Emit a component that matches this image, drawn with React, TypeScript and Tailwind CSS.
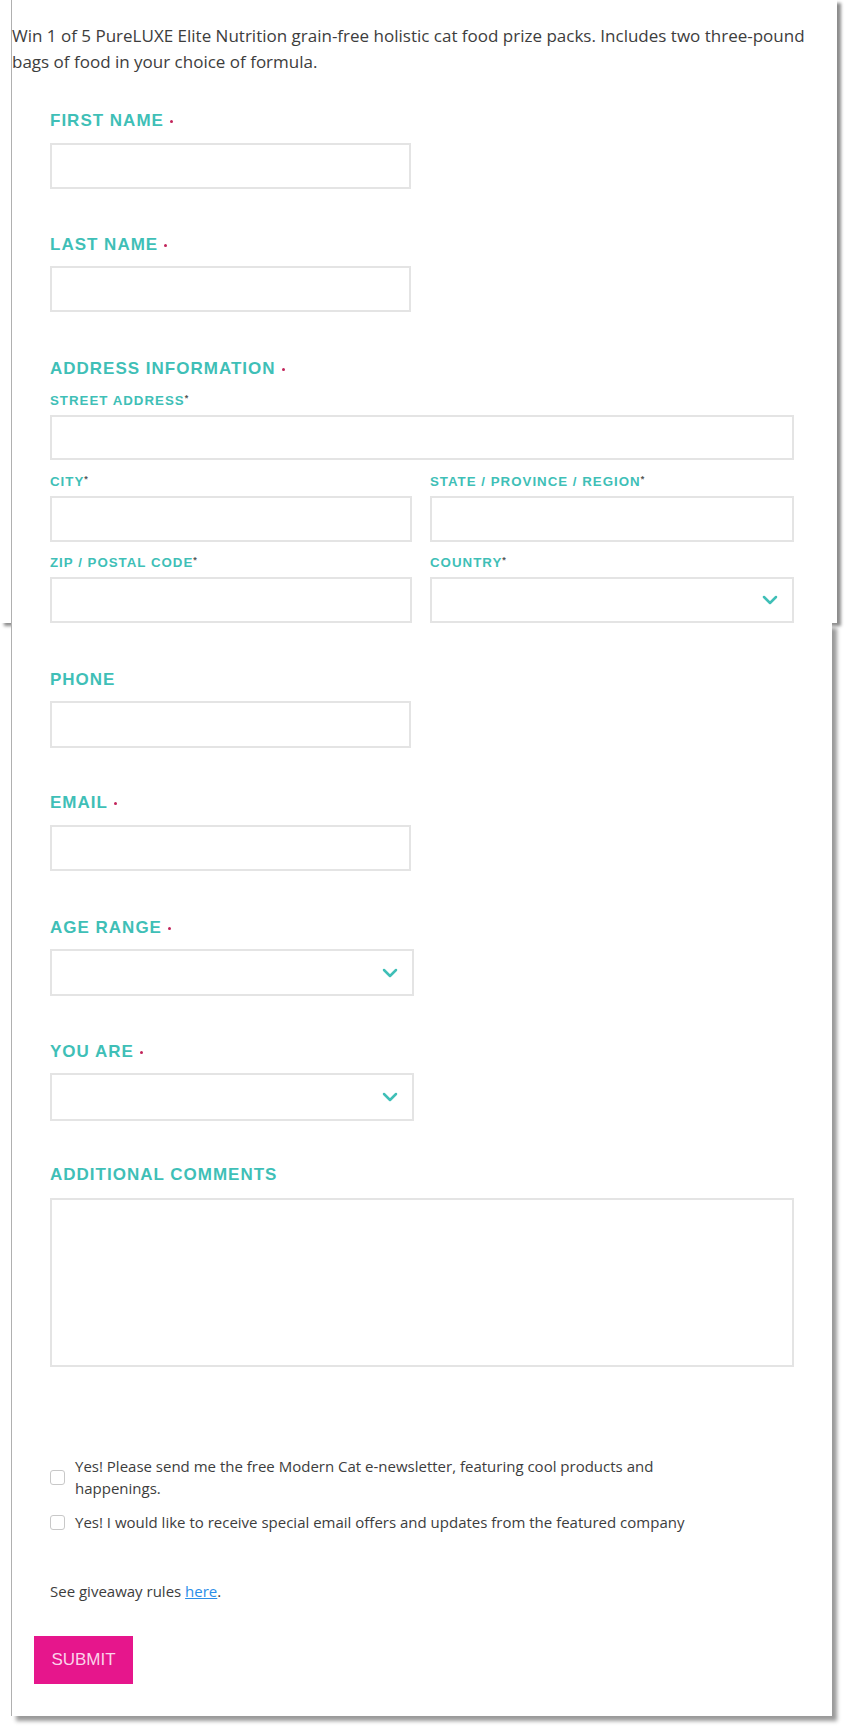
import { ChevronDown } from "lucide-react";

const TEAL = "#3fbfb7";

function Label({ text, required }: { text: string; required?: boolean }) {
  return (
    <div className="flex items-center h-5 font-['Liberation_Sans',Arial,sans-serif] font-bold text-[17px] tracking-[1px] text-[#3fbfb7] uppercase">
      {text}
      {required && <span className="ml-[6px] w-[3px] h-[3px] rounded-full bg-[#c2245a]" />}
    </div>
  );
}

function SubLabel({ text }: { text: string }) {
  return (
    <div className="flex items-start h-4 leading-4 font-['Liberation_Sans',Arial,sans-serif] font-bold text-[13.3px] tracking-[1px] text-[#3fbfb7] uppercase">
      {text}
      <span className="text-[9px] leading-[10px] text-[#555] tracking-normal">*</span>
    </div>
  );
}

function Input({ w = "w-[361px]", h = "h-[46px]" }: { w?: string; h?: string }) {
  return <div className={`${w} ${h} border-2 border-[#e4e4e4] bg-white`} />;
}

function Select({ w = "w-[364px]", h = "h-[47px]" }: { w?: string; h?: string }) {
  return (
    <div className={`${w} ${h} border-2 border-[#e4e4e4] bg-white flex items-center justify-end pr-[10px]`}>
      <ChevronDown size={24} strokeWidth={2.5} color={TEAL} />
    </div>
  );
}

function Field({ label, required, children, gap = "mt-[11px]" }: { label: string; required?: boolean; children: React.ReactNode; gap?: string }) {
  return (
    <div>
      <Label text={label} required={required} />
      <div className={gap}>{children}</div>
    </div>
  );
}

function SubField({ label, children }: { label: string; children: React.ReactNode }) {
  return (
    <div>
      <SubLabel text={label} />
      <div className="mt-[6px]">{children}</div>
    </div>
  );
}

export default function App() {
  return (
    <div className="w-[850px] min-h-[1730px] bg-white font-['Open_Sans',sans-serif] text-[#3d3d3d]">
      {/* top part of the composite screenshot */}
      <div className="w-[837px] pl-[11px] bg-white shadow-[4px_3px_3px_rgba(0,0,0,0.45)]">
        <div className="border-l border-[#b0b0b0] pt-[23px]">
          <p className="w-[815px] text-[17px] leading-[26px] text-[#3d3d3d]">
            Win 1 of 5 PureLUXE Elite Nutrition grain-free holistic cat food prize packs. Includes two three-pound bags of food in your choice of formula.
          </p>

          <div className="pl-[38px] w-[783px] mt-[36px]">
            <Field label="First Name" required gap="mt-[12px]">
              <Input />
            </Field>

            <div className="mt-[46px]">
              <Field label="Last Name" required>
                <Input />
              </Field>
            </div>

            <div className="mt-[47px]">
              <Label text="Address Information" required />
              <div className="mt-[14px]">
                <SubField label="Street Address">
                  <Input w="w-[744px]" h="h-[45px]" />
                </SubField>
              </div>
              <div className="mt-[14px] grid grid-cols-[362px_364px] gap-x-[18px]">
                <SubField label="City">
                  <Input w="w-[362px]" />
                </SubField>
                <SubField label="State / Province / Region">
                  <Input w="w-[364px]" />
                </SubField>
              </div>
              <div className="mt-[13px] grid grid-cols-[362px_364px] gap-x-[18px]">
                <SubField label="Zip / Postal Code">
                  <Input w="w-[362px]" />
                </SubField>
                <SubField label="Country">
                  <Select w="w-[364px]" h="h-[46px]" />
                </SubField>
              </div>
            </div>
          </div>
        </div>
      </div>

      {/* lower part */}
      <div className="ml-[11px] w-[821px] bg-white border-l border-[#b0b0b0] shadow-[5px_5px_4px_rgba(0,0,0,0.4)] pl-[38px] pt-[47px] pb-[32px]">
        <Field label="Phone">
          <Input h="h-[47px]" />
        </Field>

        <div className="mt-[45px]">
          <Field label="Email" required gap="mt-[12px]">
            <Input />
          </Field>
        </div>

        <div className="mt-[47px]">
          <Field label="Age Range" required>
            <Select />
          </Field>
        </div>

        <div className="mt-[46px]">
          <Field label="You Are" required>
            <Select h="h-[48px]" />
          </Field>
        </div>

        <div className="mt-[44px]">
          <Field label="Additional Comments" gap="mt-[13px]">
            <div className="w-[744px] h-[169px] border-2 border-[#e4e4e4] bg-white" />
          </Field>
        </div>

        <div className="mt-[88px] flex flex-col gap-[12px] text-[15px] leading-[22px] text-[#3d3d3d]">
          <label className="flex items-center gap-[10px]">
            <span className="shrink-0 w-[15px] h-[15px] border border-[#c8c8c8] rounded-[3px] bg-white" />
            <span className="w-[645px]">
              Yes! Please send me the free Modern Cat e-newsletter, featuring cool products and happenings.
            </span>
          </label>
          <label className="flex items-center gap-[10px]">
            <span className="shrink-0 w-[15px] h-[15px] border border-[#c8c8c8] rounded-[3px] bg-white" />
            <span className="w-[645px]">Yes! I would like to receive special email offers and updates from the featured company</span>
          </label>
        </div>

        <p className="mt-[47px] text-[15px] leading-[22px] text-[#3d3d3d]">
          See giveaway rules <a href="#" className="text-[#2b8ee8] underline">here</a>.
        </p>

        <button className="mt-[34px] ml-[-16px] w-[99px] h-[48px] bg-[#e6168c] text-[#fbd3ea] font-['Liberation_Sans',Arial,sans-serif] text-[17px] uppercase">
          Submit
        </button>
      </div>
    </div>
  );
}
